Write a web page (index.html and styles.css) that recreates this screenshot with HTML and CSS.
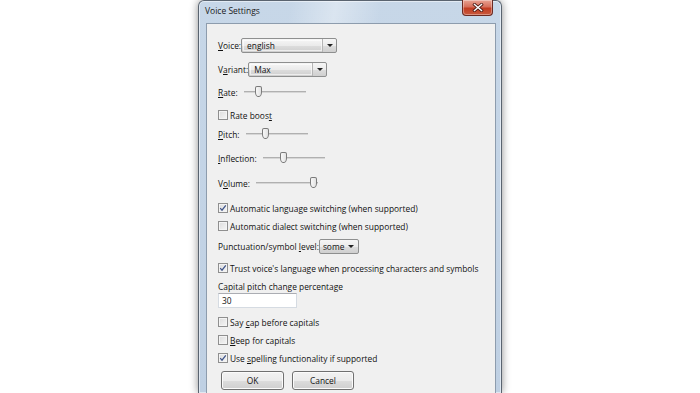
FILE: index.html
```html
<!DOCTYPE html>
<html>
<head>
<meta charset="utf-8">
<link rel="stylesheet" href="styles.css">
</head>
<body>
<div class="screen">
  <div class="window">
    <div class="titlebar">
      <span class="title">Voice Settings</span>
      <div class="close">
        <svg width="12" height="9" viewBox="0 0 12 9"><path d="M2.5 1.5 L9.5 7.5 M9.5 1.5 L2.5 7.5" stroke="#4a1a14" stroke-width="3" stroke-linecap="square"/><path d="M2.5 1.5 L9.5 7.5 M9.5 1.5 L2.5 7.5" stroke="#fff" stroke-width="1.5" stroke-linecap="square"/></svg>
      </div>
    </div>
    <div class="client">
      <div class="row h16"><span class="label"><u>V</u>oice:</span><div class="combo w-voice"><span class="ctext">english</span><span class="cbtn"><i class="tri"></i></span></div></div>
      <div class="row h16 mt8"><span class="label">V<u>a</u>riant:</span><div class="combo w-variant"><span class="ctext">Max</span><span class="cbtn"><i class="tri"></i></span></div></div>
      <div class="row h16 mt7"><span class="label"><u>R</u>ate:</span><div class="slider"><div class="track"></div><div class="thumb" style="left:11px"></div></div></div>
      <div class="row h16 mt7"><span class="cb"></span><span class="label">Rate boos<u>t</u></span></div>
      <div class="row h16 mt3"><span class="label"><u>P</u>itch:</span><div class="slider"><div class="track"></div><div class="thumb" style="left:16px"></div></div></div>
      <div class="row h16 mt8"><span class="label"><u>I</u>nflection:</span><div class="slider"><div class="track"></div><div class="thumb" style="left:17px"></div></div></div>
      <div class="row h16 mt9"><span class="label">V<u>o</u>lume:</span><div class="slider"><div class="track"></div><div class="thumb" style="left:54px"></div></div></div>
      <div class="row h16 mt9"><span class="cb checked"><svg width="8" height="8" viewBox="0 0 8 8"><path d="M1.2 4.2 L3 6.2 L6.8 1.3" fill="none" stroke="#3d5288" stroke-width="1.2"/></svg></span><span class="label">Automatic language switching (when supported)</span></div>
      <div class="row h16 mt2"><span class="cb"></span><span class="label">Automatic dialect switching (when supported)</span></div>
      <div class="row h16 mt4"><span class="label">Punctuation/symbol <u>l</u>evel:</span><div class="combo w-punct"><span class="ctext">some</span><span class="cbtn plain"><i class="tri"></i></span></div></div>
      <div class="row h16 mt6"><span class="cb checked"><svg width="8" height="8" viewBox="0 0 8 8"><path d="M1.2 4.2 L3 6.2 L6.8 1.3" fill="none" stroke="#3d5288" stroke-width="1.2"/></svg></span><span class="label">Trust voice's language when processing characters and symbols</span></div>
      <div class="row h14 mt3"><span class="label">Capital pitch change percentage</span></div>
      <div class="row mt0"><div class="edit">30</div></div>
      <div class="row h16 mt6"><span class="cb"></span><span class="label">Say <u>c</u>ap before capitals</span></div>
      <div class="row h16 mt2"><span class="cb"></span><span class="label"><u>B</u>eep for capitals</span></div>
      <div class="row h16 mt2"><span class="cb checked"><svg width="8" height="8" viewBox="0 0 8 8"><path d="M1.2 4.2 L3 6.2 L6.8 1.3" fill="none" stroke="#3d5288" stroke-width="1.2"/></svg></span><span class="label">Use <u>s</u>pelling functionality if supported</span></div>
      <div class="row buttons mt5"><div class="btn">OK</div><div class="btn">Cancel</div></div>
    </div>
  </div>
</div>
</body>
</html>
```

FILE: styles.css
```css
* { box-sizing: border-box; }
html, body { margin: 0; padding: 0; }
body {
  width: 700px;
  height: 393px;
  overflow: hidden;
  background: #ffffff;
  font-family: "Open Sans", "Noto Sans", sans-serif;
  font-size: 8.4px;
  color: #111111;
}
.screen {
  display: flex;
  padding-left: 198px;
  height: 393px;
}
.window {
  width: 304px;
  height: 393px;
  border: 1px solid #5a6470;
  border-bottom: none;
  border-radius: 6px 6px 0 0;
  background: linear-gradient(180deg, #c7d7e8 0%, #bfd0e3 100%);
  box-shadow: 0 0 9px rgba(0,0,0,0.45), inset 0 0 0 1px rgba(255,255,255,0.5);
  padding: 0 5px 0 7px;
  display: flex;
  flex-direction: column;
}
.titlebar {
  height: 22px;
  display: flex;
  align-items: flex-start;
  justify-content: space-between;
  background: linear-gradient(100deg, rgba(255,255,255,0) 30%, rgba(255,255,255,0.35) 45%, rgba(255,255,255,0) 60%);
  margin: 0 -5px 0 -7px;
  padding: 0 8px 0 6px;
}
.title {
  padding-top: 4px;
  font-size: 8.5px;
  color: #1a1a1a;
}
.close {
  width: 31px;
  height: 16px;
  margin-top: -1px;
  border: 1px solid #6b2a22;
  border-top: none;
  border-radius: 0 0 4px 4px;
  background: linear-gradient(180deg, #e8a393 0%, #d6705c 45%, #c23c22 55%, #c85a3e 100%);
  box-shadow: inset 0 0 0 1px rgba(255,255,255,0.35);
  display: flex;
  align-items: center;
  justify-content: center;
}
.client {
  flex: 1;
  background: #f0f0f0;
  border: 1px solid #8d9cad;
  border-bottom: none;
  padding: 13px 0 0 11px;
  display: flex;
  flex-direction: column;
}
.row {
  display: flex;
  align-items: center;
}
.h16 { height: 16px; }
.h14 { height: 14px; }
.mt0 { margin-top: 0; }
.mt2 { margin-top: 2px; }
.mt3 { margin-top: 3px; }
.mt4 { margin-top: 4px; }
.mt5 { margin-top: 5px; }
.mt6 { margin-top: 6px; }
.mt7 { margin-top: 7px; }
.mt8 { margin-top: 8px; }
.mt9 { margin-top: 9px; }
.label { white-space: nowrap; }
u { text-decoration-thickness: 1px; text-underline-offset: 1px; }
.combo {
  height: 15px;
  border: 1px solid #8e8f8f;
  border-radius: 2px;
  background: linear-gradient(180deg, #f6f6f6 0%, #ebebeb 50%, #dddddd 51%, #cfcfcf 100%);
  display: flex;
  align-items: stretch;
}
.w-voice { width: 96px; }
.w-variant { width: 79px; }
.w-punct { width: 40px; }
.ctext {
  flex: 1;
  display: flex;
  align-items: center;
  padding-left: 3px;
  padding-top: 1px;
  color: #111;
}
.w-voice .ctext, .w-variant .ctext {
  margin: 1px 0 1px 1px;
  border: 1px solid rgba(255,255,255,0.6);
}
.cbtn {
  width: 14px;
  display: flex;
  align-items: center;
  justify-content: center;
  border-left: 1px solid #b5b5b5;
}
.cbtn.plain { border-left: none; }
.tri {
  width: 0; height: 0;
  border-left: 3px solid transparent;
  border-right: 3px solid transparent;
  border-top: 3px solid #222;
}
.slider {
  position: relative;
  width: 62px;
  height: 16px;
  margin-left: 6px;
}
.track {
  position: absolute;
  left: 0; right: 0; top: 7px;
  height: 2px;
  background: #d6d6d6;
  border-top: 1px solid #b0b0b0;
}
.thumb {
  position: absolute;
  top: 2px;
  width: 7px;
  height: 11px;
  border: 1px solid #7a7a7a;
  border-radius: 2px 2px 3px 3px / 2px 2px 5px 5px;
  background: linear-gradient(90deg, #f8f8f8, #e2e2e2);
}
.cb {
  width: 10px;
  height: 10px;
  border: 1px solid #8f8f8f;
  background: linear-gradient(135deg, #dcdcdc, #f6f6f6);
  box-shadow: inset 0 0 0 1px #f4f4f4;
  margin-right: 2px;
  display: flex;
  align-items: center;
  justify-content: center;
}
.edit {
  width: 79px;
  height: 15px;
  background: #fff;
  border: 1px solid #d5dbe2;
  border-top-color: #abadb3;
  padding-left: 3px;
  display: flex;
  align-items: center;
}
.buttons {
  gap: 8px;
  padding-left: 3px;
}
.btn {
  height: 19px;
  width: 63px;
  border: 1px solid #707070;
  border-radius: 3px;
  background: linear-gradient(180deg, #f2f2f2 0%, #ebebeb 50%, #dddddd 51%, #cfcfcf 100%);
  box-shadow: inset 0 0 0 1px #fbfbfb;
  display: flex;
  align-items: center;
  justify-content: center;
}
.btn + .btn { width: 62px; }
```
